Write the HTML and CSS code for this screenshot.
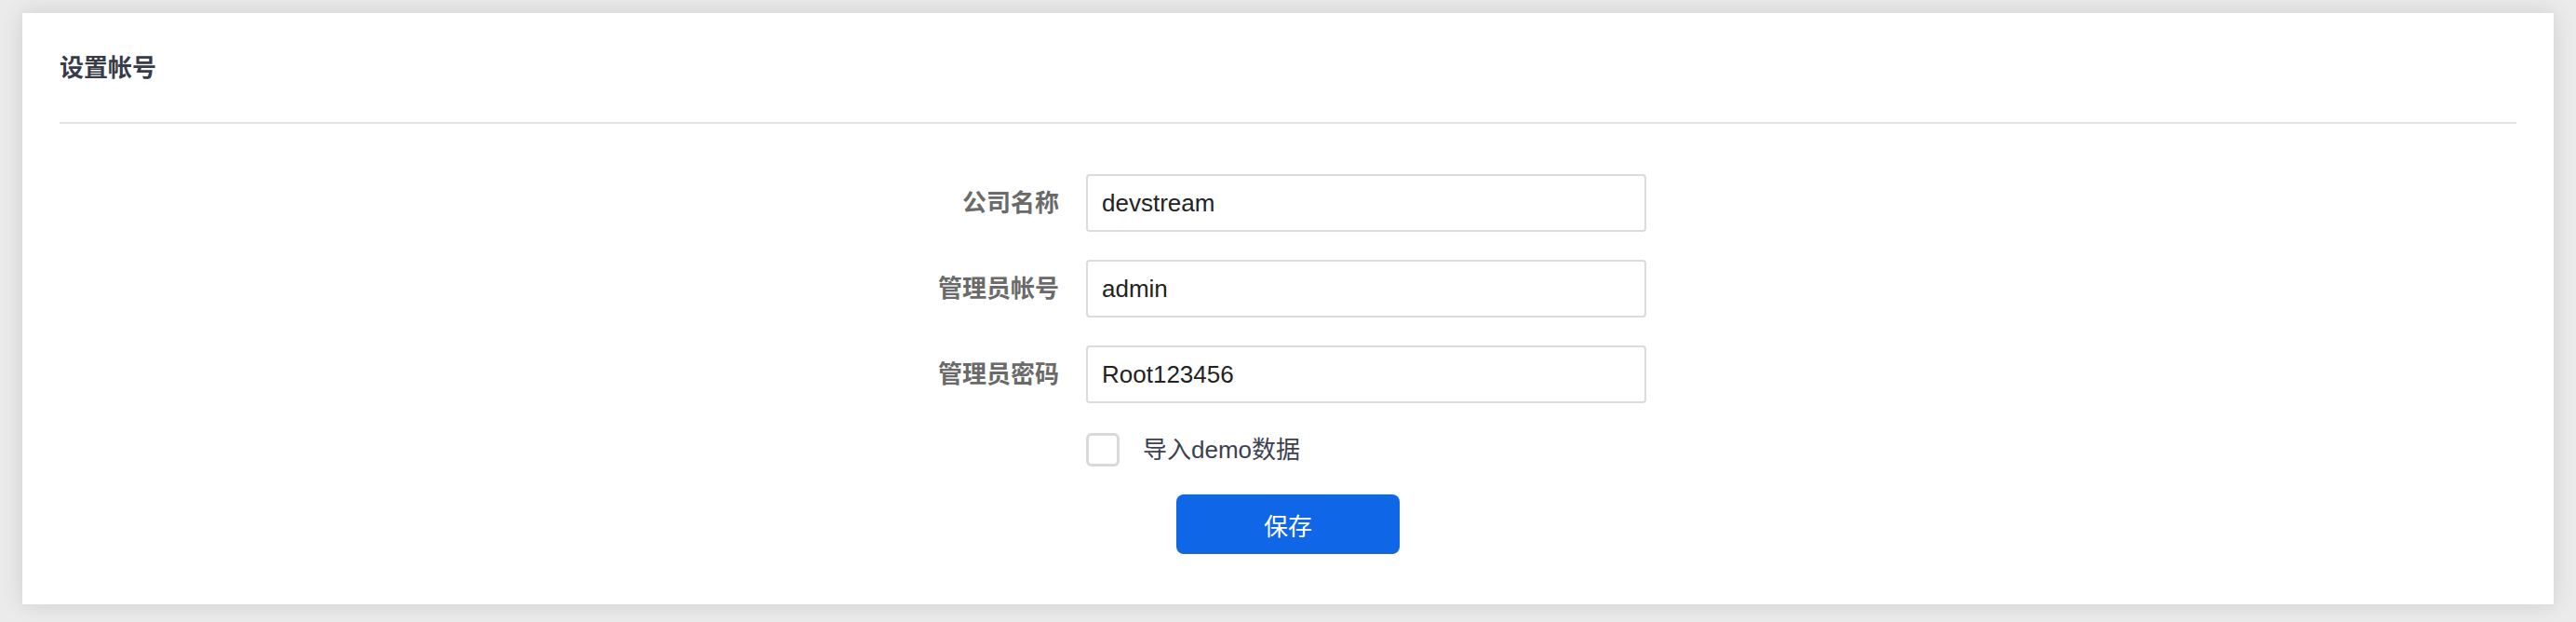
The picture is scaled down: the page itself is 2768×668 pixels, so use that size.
FILE: index.html
```html
<!DOCTYPE html>
<html lang="zh-CN">
<head>
<meta charset="utf-8">
<title>设置帐号</title>
<link rel="stylesheet" href="styles.css">
</head>
<body>
<div class="card">
  <div class="card-header"><h2 class="title">设置帐号</h2></div>
  <div class="divider"></div>
  <form class="form">
    <label class="label">公司名称</label>
    <input class="input" type="text" value="devstream">
    <label class="label">管理员帐号</label>
    <input class="input" type="text" value="admin">
    <label class="label">管理员密码</label>
    <input class="input" type="text" value="Root123456">
    <span class="spacer"></span>
    <label class="check"><span class="box"></span><span class="check-text">导入demo数据</span></label>
  </form>
  <div class="actions"><button class="btn" type="button">保存</button></div>
</div>
</body>
</html>
```

FILE: styles.css
```css
html, body {
  margin: 0;
  padding: 0;
}
body {
  background: #ebebeb;
  font-family: "Liberation Sans", "Noto Sans CJK SC", sans-serif;
  padding: 14px 24px 19px 24px;
  box-sizing: border-box;
  height: 668px;
  overflow: hidden;
}
.card {
  background: #ffffff;
  box-shadow: 0 0 22px rgba(0, 0, 0, 0.13);
  padding: 0 40px 54px 40px;
  height: 635px;
  box-sizing: border-box;
}
.card-header {
  height: 117px;
  display: flex;
  align-items: center;
}
.title {
  margin: 0;
  font-size: 26px;
  line-height: 30px;
  font-weight: 700;
  color: #383b48;
}
.divider {
  height: 2px;
  background: #e4e4e4;
}
.form {
  margin: 54px 0 0 874px;
  display: grid;
  grid-template-columns: 200px 602px;
  column-gap: 29px;
  row-gap: 30px;
  align-items: center;
}
.label {
  text-align: right;
  font-size: 26px;
  line-height: 30px;
  font-weight: 700;
  color: #6a6a6a;
  white-space: nowrap;
}
.input {
  box-sizing: border-box;
  width: 602px;
  height: 62px;
  border: 2px solid #dcdcdc;
  border-radius: 4px;
  padding: 0 15px;
  font-family: "Liberation Sans", "Noto Sans CJK SC", sans-serif;
  font-size: 26px;
  color: #222222;
  background: #ffffff;
  outline: none;
}
.check {
  display: flex;
  align-items: center;
  gap: 25px;
  margin-top: 2px;
}
.box {
  width: 36px;
  height: 36px;
  box-sizing: border-box;
  border: 3px solid #d9d9d9;
  border-radius: 6px;
  background: #ffffff;
}
.check-text {
  font-size: 26px;
  line-height: 36px;
  color: #3c4150;
}
.actions {
  display: flex;
  justify-content: center;
  margin-top: 30px;
}
.btn {
  width: 240px;
  height: 64px;
  border: none;
  border-radius: 8px;
  background: #0f66e6;
  color: #ffffff;
  font-family: "Liberation Sans", "Noto Sans CJK SC", sans-serif;
  font-size: 26px;
  cursor: pointer;
}
```
